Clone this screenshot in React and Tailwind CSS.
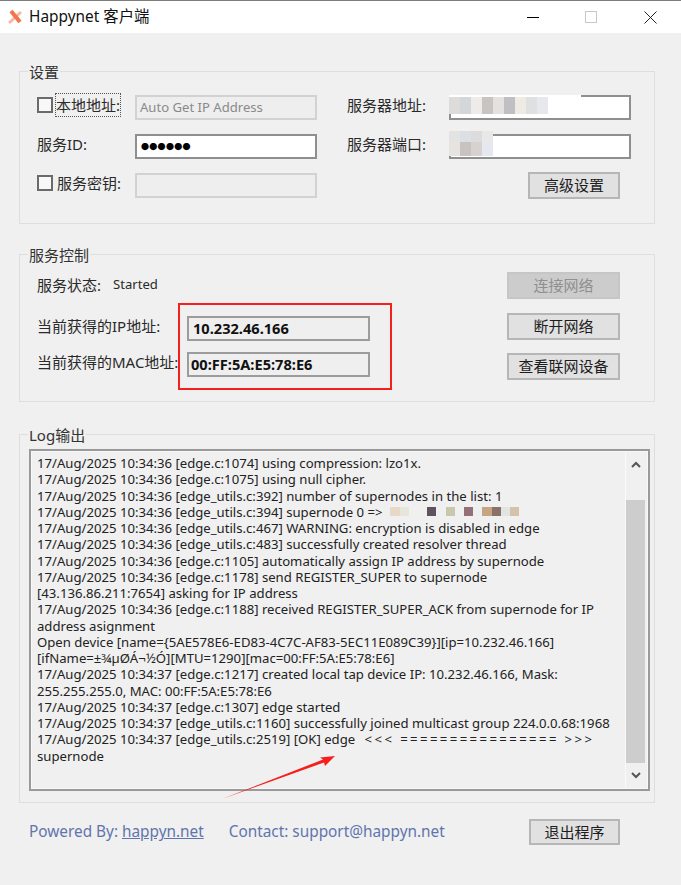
const F = { fontFamily: '"Noto Sans", "Noto Sans CJK SC", sans-serif' };

const LOG = [
  "17/Aug/2025 10:34:36 [edge.c:1074] using compression: lzo1x.",
  "17/Aug/2025 10:34:36 [edge.c:1075] using null cipher.",
  "17/Aug/2025 10:34:36 [edge_utils.c:392] number of supernodes in the list: 1",
  "MOSAIC",
  "17/Aug/2025 10:34:36 [edge_utils.c:467] WARNING: encryption is disabled in edge",
  "17/Aug/2025 10:34:36 [edge_utils.c:483] successfully created resolver thread",
  "17/Aug/2025 10:34:36 [edge.c:1105] automatically assign IP address by supernode",
  "17/Aug/2025 10:34:36 [edge.c:1178] send REGISTER_SUPER to supernode",
  "[43.136.86.211:7654] asking for IP address",
  "17/Aug/2025 10:34:36 [edge.c:1188] received REGISTER_SUPER_ACK from supernode for IP",
  "address asignment",
  "Open device [name={5AE578E6-ED83-4C7C-AF83-5EC11E089C39}][ip=10.232.46.166]",
  "[ifName=±¾µØÁ¬½Ó][MTU=1290][mac=00:FF:5A:E5:78:E6]",
  "17/Aug/2025 10:34:37 [edge.c:1217] created local tap device IP: 10.232.46.166, Mask:",
  "255.255.255.0, MAC: 00:FF:5A:E5:78:E6",
  "17/Aug/2025 10:34:37 [edge.c:1307] edge started",
  "17/Aug/2025 10:34:37 [edge_utils.c:1160] successfully joined multicast group 224.0.0.68:1968",
  "OK",
  "supernode",
];

function Group({ title, className, children }) {
  return (
    <div className={`relative ml-[19px] mr-[26px] border border-solid border-[#dedede] ${className}`}>
      <span className="absolute left-[8px] top-[-9px] bg-[#f0f0f0] px-px text-[15px] leading-[18px] text-[#333]">{title}</span>
      {children}
    </div>
  );
}

function Btn({ children, disabled, className = "" }) {
  return (
    <div className={`flex shrink-0 items-center justify-center border-2 border-solid text-[15px] ${disabled ? "border-[#c6c6c6] bg-[#cccccc] text-[#8f8f8f]" : "border-[#b6b6b6] bg-[#e1e1e1] text-[#1c1c1c]"} ${className}`}>
      {children}
    </div>
  );
}

function Check() {
  return <span className="inline-block h-4 w-4 shrink-0 border-2 border-solid border-[#6a6a6a] bg-[#f8f8f8]" />;
}

function Row({ label, left, input, label2, input2, className = "", children }) {
  return (
    <div className={`flex h-[25px] items-center ${className}`}>
      <div className="flex w-[98px] shrink-0 items-center pb-[5px] text-[15px] text-[#2a2a2a]">{left}{label}</div>
      {input}
      {label2 && <div className="ml-[30px] w-[102px] shrink-0 pb-[5px] text-[15px] text-[#2a2a2a]">{label2}</div>}
      {input2}
      {children}
    </div>
  );
}

const box = "h-[25px] w-[182px] shrink-0 border-2 border-solid";
const activeBox = `${box} border-[#8f8f8f] bg-white`;
const offBox = `${box} border-[#d2d2d2] bg-[#eeeeee]`;

function Mosaic({ colors }) {
  return (
    <div className="flex h-full">
      {colors.map((c, i) => <span key={i} className="h-full w-[11px] shrink-0" style={{ background: c }} />)}
    </div>
  );
}

const LOG_MOSAIC = ["#e8d8c8", "#e6e6da", "transparent", "#f0f0ee", "#5e5460", "transparent", "#c9c7ae", "transparent", "#967078", "#edf0ef", "#c7a582", "#8a7268", "#e0e4e2", "#d5c3a9"];

export default function App() {
  return (
    <div className="relative h-[885px] w-[681px] overflow-hidden bg-[#f0f0f0]" style={F}>
      {/* title bar */}
      <div className="flex h-[33px] items-center border-t border-solid border-[#7d7d7d] bg-white pl-[7px]">
        <svg width="16" height="16" viewBox="0 0 16 16" className="mr-[6px]">
          <path d="M2 14 L14 3" stroke="#f9b7a3" strokeWidth="3" />
          <path d="M4 2 L13 13" stroke="#f4734f" strokeWidth="4" />
        </svg>
        <span className="text-[15.4px] text-[#111]">Happynet 客户端</span>
        <div className="ml-auto flex items-center">
          <span className="mr-[46px] h-px w-3 bg-black" />
          <span className="mr-[47px] h-3 w-3 border border-solid border-[#c8c8c8]" />
          <svg width="13" height="13" viewBox="0 0 13 13" className="mr-[24px]">
            <path d="M0.5 0.5 L12.5 12.5 M12.5 0.5 L0.5 12.5" stroke="#222" strokeWidth="1" />
          </svg>
        </div>
      </div>

      {/* settings */}
      <Group title="设置" className="mt-[38px] h-[153px] pl-[17px] pr-[34px] pt-[23px]">
        <Row
          left={<Check />}
          label={<span className="ml-[3px] outline-1 outline-dotted outline-[#555]">本地地址:</span>}
          input={<div className={`${offBox} flex items-center pl-[3px] text-[13.1px] text-[#8a8a8a]`}>Auto Get IP Address</div>}
          label2="服务器地址:"
          input2={
            <div className={`${activeBox} relative`}>
              <div className="absolute left-[-2px] top-[-2px] h-[4px] w-[132px] bg-white" />
              <div className="absolute left-[-2px] top-0 h-[17px]"><Mosaic colors={["#dddcda", "#d4d7da", "#eeece8", "#c7c4c1", "#e3e2df", "#c0c0c4", "#eeebe4", "#dfe0e2", "#e7e8ec"]} /></div>
            </div>
          }
        />
        <Row
          className="mt-[14px]"
          label="服务ID:"
          input={<div className={`${activeBox} flex items-center pl-[4px] text-[8px] tracking-[0.3px] text-black`}>●●●●●●</div>}
          label2="服务器端口:"
          input2={
            <div className={`${activeBox} relative`}>
              <div className="absolute left-[-2px] top-[-5px] h-[11px]"><Mosaic colors={["#e3e3e3", "#dcdfe4", "#dcdcdc", "#e8e8e8"]} /></div>
              <div className="absolute left-[-2px] top-[6px] h-[14px]"><Mosaic colors={["#e7e3e0", "#c8c2c2", "#d6d2d0", "#e6e8f0"]} /></div>
            </div>
          }
        />
        <Row
          className="mt-[14px]"
          left={<Check />}
          label={<span className="ml-[4px]">服务密钥:</span>}
          input={<div className={offBox} />}
        >
          <Btn className="ml-auto h-[27px] w-[92px]">高级设置</Btn>
        </Row>
      </Group>

      {/* service control */}
      <Group title="服务控制" className="mt-[30px] flex h-[148px] justify-between pl-[17px] pr-[34px]">
        <div className="flex flex-col text-[15px] text-[#2a2a2a]">
          <div className="mt-[20px] flex h-[20px] items-center">
            <span>服务状态:</span>
            <span className="ml-[12px] text-[13.1px]">Started</span>
          </div>
          <div className="mt-[21px] flex h-[25px] items-center">
            <span className="w-[150px] pb-[5px]">当前获得的IP地址:</span>
            <div className="flex h-[25px] w-[183px] items-center border-2 border-solid border-[#9c9c9c] bg-[#efefef] pl-[4px] text-[14.6px] font-bold text-[#111]">10.232.46.166</div>
          </div>
          <div className="mt-[11px] flex h-[25px] items-center">
            <span className="w-[150px] pb-[5px]">当前获得的MAC地址:</span>
            <div className="flex h-[25px] w-[183px] items-center border-2 border-solid border-[#9c9c9c] bg-[#efefef] pl-[2px] text-[14.6px] font-bold text-[#111]">00:FF:5A:E5:78:E6</div>
          </div>
        </div>
        <div className="flex flex-col pt-[17px]">
          <Btn disabled className="h-[27px] w-[113px]">连接网络</Btn>
          <Btn className="mt-[14px] h-[27px] w-[113px]">断开网络</Btn>
          <Btn className="mt-[13px] h-[27px] w-[113px]">查看联网设备</Btn>
        </div>
      </Group>

      {/* log */}
      <Group title="Log输出" className="mt-[32px] h-[369px] pl-[9px] pt-[14px]">
        <div className="h-[342px] w-[621px] border-2 border-solid border-[#9a9a9a]">
          <div className="flex h-full border border-solid border-[#f8f8f8] shadow-[inset_1px_1px_0_#a8a8a8]">
            <div className="min-w-0 flex-1 whitespace-nowrap pl-[5px] pt-[3px] text-[13.15px] leading-[16.25px] text-[#222]">
              {LOG.map((l, i) =>
                l === "MOSAIC" ? (
                  <div key={i} className="flex h-[16.25px] items-center">
                    <span>17/Aug/2025 10:34:36 [edge_utils.c:394] supernode 0 =&gt;</span>
                    <div className="ml-[8px] flex h-[9px]">
                      {LOG_MOSAIC.map((c, j) => (
                        <span key={j} className="h-[9px] w-[9.2px]" style={{ background: c }} />
                      ))}
                    </div>
                  </div>
                ) : l === "OK" ? (
                  <div key={i}>
                    17/Aug/2025 10:34:37 [edge_utils.c:2519] [OK] edge <span className="ml-[6px] tracking-[2.4px]">&lt;&lt;&lt; ================ &gt;&gt;&gt;</span>
                  </div>
                ) : (
                  <div key={i}>{l}</div>
                )
              )}
            </div>
            <div className="mr-[2px] flex w-[20px] shrink-0 flex-col items-center border-l border-solid border-[#fafafa]">
              <svg width="10" height="7" viewBox="0 0 10 7" className="mb-[32px] mt-[9px]"><path d="M1 6 L5 2 L9 6" fill="none" stroke="#555" strokeWidth="2" /></svg>
              <div className="h-[263px] w-full shrink-0 bg-[#cdcdcd]" />
              <svg width="10" height="7" viewBox="0 0 10 7" className="mt-[9px]"><path d="M1 1 L5 5 L9 1" fill="none" stroke="#555" strokeWidth="2" /></svg>
            </div>
          </div>
        </div>
      </Group>

      {/* footer */}
      <div className="mt-[16px] flex h-[26px] items-center pl-[29px] text-[15.35px] text-[#5f75ad]">
        <span>Powered By: <span className="underline">happyn.net</span></span>
        <span className="ml-[25px]">Contact: support@happyn.net</span>
        <Btn className="ml-auto mr-[61px] h-[26px] w-[91px]">退出程序</Btn>
      </div>

      {/* annotations */}
      <div className="absolute left-[178px] top-[303px] h-[87px] w-[214px] border-2 border-solid border-[#f5201c]" />
      <svg className="absolute left-0 top-0" width="681" height="885">
        <path d="M222 799 L323 759.5 L320 757.5 L335 756 L325 766 L324 762.5 Z" fill="#f5201c" />
      </svg>
    </div>
  );
}
